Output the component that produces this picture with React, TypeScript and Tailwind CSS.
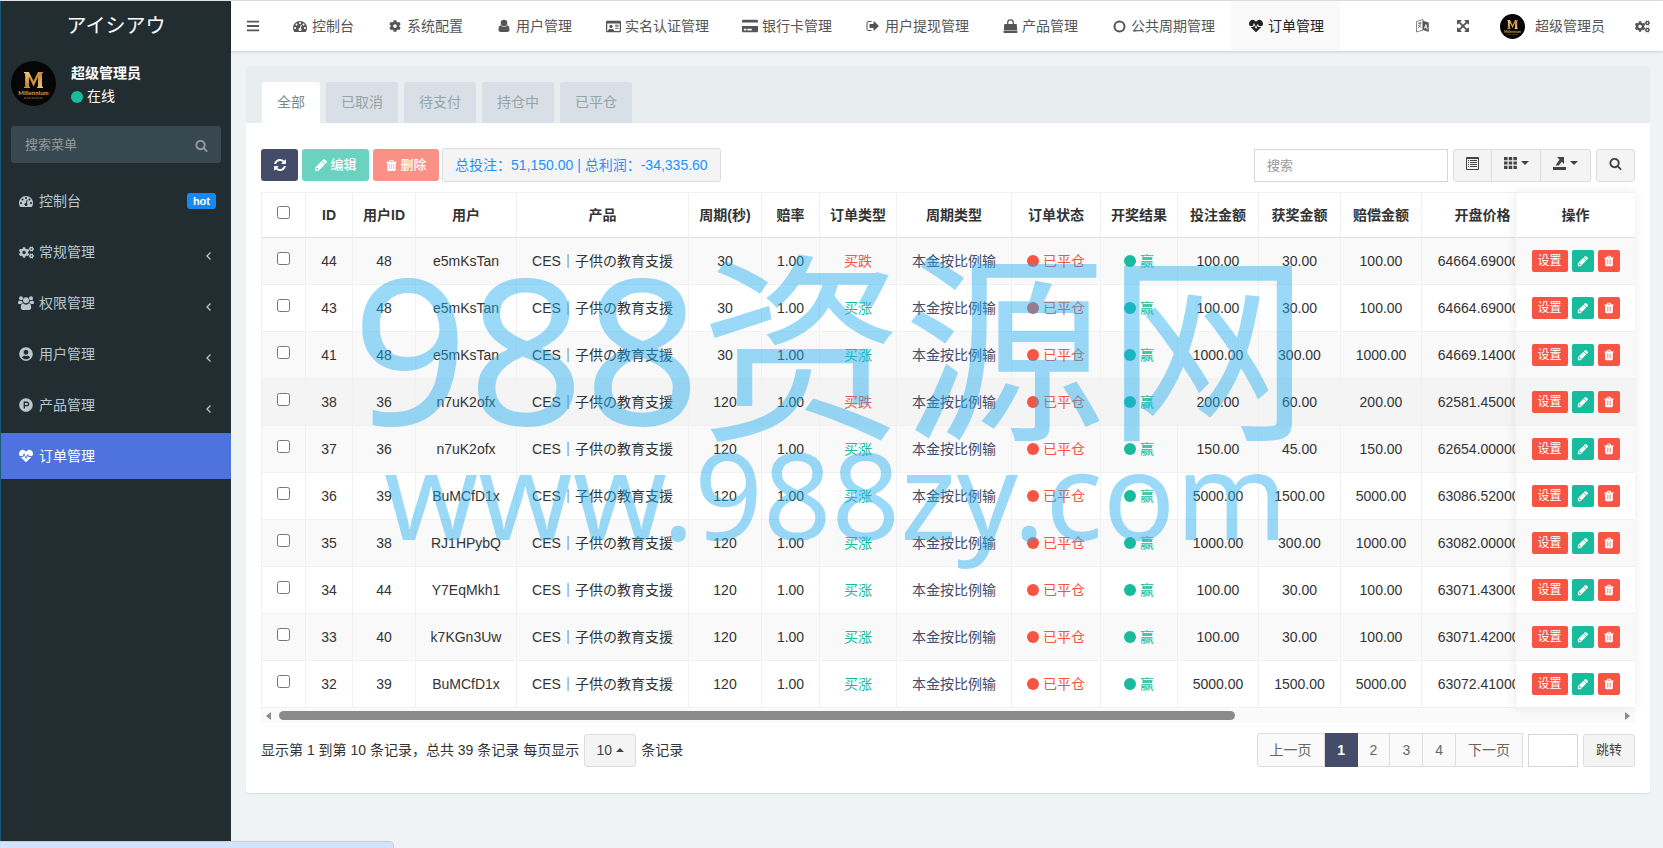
import type { ReactNode } from 'react';
import { FaBars, FaCog, FaCogs, FaCreditCard, FaHeartbeat, FaProductHunt, FaRegIdCard, FaUserCircle } from 'react-icons/fa';
import clsx from 'clsx';

interface GlyphProps {
  d: string;
  size?: number;
}

function Glyph({ d, size = 14 }: GlyphProps) {
  return (
    <svg width={size} height={size} viewBox="0 0 1792 1792" fill="currentColor" className="inline-block shrink-0" aria-hidden="true">
      <path d={d} />
    </svg>
  );
}

const DASHBOARD =
  'M384 1152q0-53-37.500-90.500t-90.500-37.500-90.500 37.500-37.500 90.500 37.500 90.500 90.500 37.500 90.500-37.500 37.500-90.500zm192-448q0-53-37.500-90.500t-90.500-37.500-90.500 37.500-37.500 90.500 37.500 90.500 90.500 37.500 90.500-37.500 37.500-90.500zm428 481l101-382q6-26-7.500-48.500t-38.500-29.500-48 6.500-30 39.500l-101 382q-60 5-107 43.500t-63 98.500q-20 77 20 146t117 89 146-20 89-117q16-60-6-117t-72-91zm660-33q0-53-37.500-90.500t-90.500-37.500-90.500 37.500-37.500 90.500 37.500 90.500 90.500 37.500 90.500-37.500 37.500-90.500zm-640-640q0-53-37.500-90.500t-90.500-37.500-90.500 37.500-37.500 90.500 37.500 90.500 90.500 37.500 90.500-37.500 37.500-90.500zm448 192q0-53-37.500-90.500t-90.500-37.500-90.500 37.500-37.500 90.500 37.500 90.500 90.500 37.500 90.500-37.500 37.500-90.500zm320 448q0 261-141 483-19 29-54 29h-1402q-35 0-54-29-141-221-141-483 0-182 71-348t191-286 286-191 348-71 348 71 286 191 191 286 71 348z';
const REFRESH =
  'M1639 1056q0 5-1 7-64 268-268 434.500t-478 166.500q-146 0-282.500-55t-243.500-157l-129 129q-19 19-45 19t-45-19-19-45v-448q0-26 19-45t45-19h448q26 0 45 19t19 45-19 45l-137 137q71 66 161 102t187 36q134 0 250-65t186-179q11-17 53-117 8-23 30-23h192q13 0 22.500 9.500t9.500 22.500zm25-800v448q0 26-19 45t-45 19h-448q-26 0-45-19t-19-45 19-45l138-138q-148-137-349-137-134 0-250 65t-186 179q-11 17-53 117-8 23-30 23h-199q-13 0-22.500-9.500t-9.500-22.500v-7q65-268 270-434.500t480-166.500q146 0 284 55.500t245 156.500l130-129q19-19 45-19t45 19 19 45z';
const PENCIL =
  'M491 1536l91-91-235-235-91 91v107h128v128h107zm469-1120l416 416-832 832h-416v-416zm683 96q0 53-37 90l-166 166-416-416 166-165q36-38 90-38 53 0 91 38l235 234q37 39 37 91z';
const TRASH =
  'M672 1400v-744h-72v744zm260 0v-744h-72v744zm260 0v-744h-72v744zm-520-1016h448l-48-117q-7-9-17-11h-317q-10 2-17 11zm928 32v64q0 14-9 23t-23 9h-96v948q0 83-47 143.500t-113 60.500h-832q-66 0-113-58.500t-47-141.500v-952h-96q-14 0-23-9t-9-23v-64q0-14 9-23t23-9h309l70-167q15-37 54-63t79-26h320q40 0 79 26t54 63l70 167h309q14 0 23 9t9 23z';
const SEARCH =
  'M1216 832q0-185-131.500-316.500t-316.500-131.500-316.500 131.500-131.500 316.500 131.500 316.500 316.500 131.500 316.500-131.500 131.500-316.500zm512 832q0 52-38 90t-90 38q-54 0-90-38l-343-342q-179 124-399 124-143 0-273.500-55.500t-225-150-150-225-55.500-273.500 55.500-273.500 150-225 225-150 273.500-55.500 273.500 55.500 225 150 150 225 55.500 273.500q0 220-124 399l343 343q37 37 37 90z';
const SIGN_OUT =
  'M704 1440q0 4 1 20t.5 26.500-3 23.500-10 19.500-20.500 6.500h-320q-119 0-203.500-84.500t-84.500-203.500v-704q0-119 84.500-203.500t203.500-84.500h320q13 0 22.500 9.500t9.500 22.500q0 4 1 20t.5 26.500-3 23.500-10 19.500-20.500 6.500h-320q-66 0-113 47t-47 113v704q0 66 47 113t113 47h312l11.500 1 11.500 3 8 5.500 7 9 2 13.500zm928-544q0 26-19 45l-544 544q-19 19-45 19t-45-19-19-45v-288h-448q-26 0-45-19t-19-45v-384q0-26 19-45t45-19h448v-288q0-26 19-45t45-19 45 19l544 544q19 19 19 45z';
const ARROWS =
  'M1411 541l-355 355 355 355 144-144q29-31 70-14 39 17 39 59v448q0 26-19 45t-45 19h-448q-42 0-59-40-17-39 14-69l144-144-355-355-355 355 144 144q31 30 14 69-17 40-59 40h-448q-26 0-45-19t-19-45v-448q0-42 40-59 39-17 69 14l144 144 355-355-355-355-144 144q-19 19-45 19-12 0-24-5-40-17-40-59v-448q0-26 19-45t45-19h448q42 0 59 40 17 39-14 69l-144 144 355 355 355-355-144-144q-31-30-14-69 17-40 59-40h448q26 0 45 19t19 45v448q0 42-39 59-13 5-25 5-26 0-45-19z';

function UserGlyph() {
  return (
    <svg width="12" height="14" viewBox="0 0 12 14" fill="currentColor" aria-hidden="true">
      <circle cx="6" cy="4" r="3.300" />
      <path d="M2.700 6.300C1.200 6.700.5 8.200.5 10.800c0 1.300.8 2.200 2 2.200h7c1.200 0 2-.9 2-2.200 0-2.600-.7-4.100-2.200-4.500A4.300 4.300 0 0 1 6 7.800a4.300 4.300 0 0 1-3.300-1.500z" />
    </svg>
  );
}

function UsersGlyph() {
  return (
    <svg width="16" height="14" viewBox="0 0 16 14" fill="currentColor" aria-hidden="true">
      <circle cx="3" cy="2.200" r="2" />
      <circle cx="13" cy="2.200" r="2" />
      <circle cx="8" cy="4.300" r="3" />
      <path d="M1.200 4.500c-.8.300-1.200 1.300-1.200 2.400 0 .6.400 1 1 1h2.200c.4-.5 1-.8 1.700-.9A4 4 0 0 1 4 4.700c-.9.500-1.900.4-2.800-.2zM14.800 4.500c.8.300 1.200 1.300 1.200 2.400 0 .6-.4 1-1 1h-2.200c-.4-.5-1-.8-1.700-.9A4 4 0 0 0 12 4.700c.9.500 1.900.4 2.800-.2z" />
      <path d="M5 7.200c-1.500.2-2.200 1.900-2.200 4.600 0 1.300.8 2.100 2 2.100h6.400c1.200 0 2-.8 2-2.100 0-2.700-.7-4.400-2.200-4.600a4.300 4.300 0 0 1-6 0z" />
    </svg>
  );
}

function BagGlyph() {
  return (
    <svg width="15" height="14" viewBox="0 0 15 14" fill="currentColor" aria-hidden="true">
      <path d="M1.300 5h12.400l.5 6H.8zM.7 11.600h13.600l.2 1.600c0 .4-.3.800-.8.800H1.300c-.5 0-.8-.4-.8-.8z" />
      <path d="M4.700 7V3.700a2.800 2.800 0 0 1 5.600 0V7" fill="none" stroke="currentColor" strokeWidth="1.300" />
    </svg>
  );
}

function CircleGlyph() {
  return (
    <svg width="13" height="13" viewBox="0 0 13 13" fill="none" stroke="currentColor" strokeWidth="2" aria-hidden="true">
      <circle cx="6.500" cy="6.500" r="5" />
    </svg>
  );
}

function LanguageGlyph() {
  return (
    <svg width="13" height="14" viewBox="0 0 13 14" fill="none" stroke="currentColor" aria-hidden="true">
      <path d="M.5 2.500 7 .5v10.500l-6.500 2z" strokeWidth=".7" />
      <path d="M2 4.500l3.500-1M3.800 3v2.500M2 9c1.500-1 2.500-2.500 3-5M2.500 6c.5 1.500 1.500 2 3 2.500" strokeWidth=".7" />
      <path d="M7 2l5.500 1.800v8.700L7 10.800z" fill="currentColor" strokeWidth=".5" />
      <path d="M8.500 9.500l1.300-4 1.500 5M9 8.200l1.800.6" stroke="white" strokeWidth=".9" />
    </svg>
  );
}

function Millennium({ size }: { size: number }) {
  return (
    <svg width={size} height={size} viewBox="0 0 45 45" className="shrink-0" role="img" aria-label="Millennium">
      <defs>
        <linearGradient id="gold" x1="0" y1="0" x2="1" y2="1">
          <stop offset="0" stopColor="#f3d58b" />
          <stop offset="0.5" stopColor="#c98a35" />
          <stop offset="1" stopColor="#f0cf86" />
        </linearGradient>
      </defs>
      <circle cx="22.500" cy="22.500" r="22.500" fill="#060606" />
      <path
        d="M13 11h5l4.500 9 4.500-9h5v1.200h-1v13.600h1V27h-6v-1.200h1V16l-4.500 9.500L18 16v9.800h1V27h-6v-1.200h1.200V12.200H13z"
        fill="url(#gold)"
      />
      <text x="22.500" y="34" textAnchor="middle" fontSize="6" fontWeight="900" fill="#c9913f" fontFamily="Lato, sans-serif">
        Millennium
      </text>
      <path d="M13 37h19" stroke="#8a6a35" strokeWidth="1.200" strokeDasharray="2 .6" />
    </svg>
  );
}

function Caret({ up = false }: { up?: boolean }) {
  return (
    <svg width="8" height="4" viewBox="0 0 8 4" fill="currentColor" aria-hidden="true">
      <path d={up ? 'M0 4l4-4 4 4z' : 'M0 0h8L4 4z'} />
    </svg>
  );
}

interface NavItem {
  icon: ReactNode;
  label: string;
  badge?: string;
  arrow?: boolean;
  active?: boolean;
}

const topNav: NavItem[] = [
  { icon: <Glyph d={DASHBOARD} />, label: '控制台' },
  { icon: <FaCog size={12} />, label: '系统配置' },
  { icon: <UserGlyph />, label: '用户管理' },
  { icon: <FaRegIdCard size={15} />, label: '实名认证管理' },
  { icon: <FaCreditCard size={16} />, label: '银行卡管理' },
  { icon: <Glyph d={SIGN_OUT} />, label: '用户提现管理' },
  { icon: <BagGlyph />, label: '产品管理' },
  { icon: <CircleGlyph />, label: '公共周期管理' },
  { icon: <FaHeartbeat size={14} />, label: '订单管理', active: true },
];

const sideNav: NavItem[] = [
  { icon: <Glyph d={DASHBOARD} />, label: '控制台', badge: 'hot' },
  { icon: <FaCogs size={15} />, label: '常规管理', arrow: true },
  { icon: <UsersGlyph />, label: '权限管理', arrow: true },
  { icon: <FaUserCircle size={14} />, label: '用户管理', arrow: true },
  { icon: <FaProductHunt size={14} />, label: '产品管理', arrow: true },
  { icon: <FaHeartbeat size={14} />, label: '订单管理', active: true },
];

const tabs = ['全部', '已取消', '待支付', '持仓中', '已平仓'];

const columns = [
  { title: 'ID', width: 47 },
  { title: '用户ID', width: 63 },
  { title: '用户', width: 101 },
  { title: '产品', width: 172 },
  { title: '周期(秒)', width: 73 },
  { title: '赔率', width: 58 },
  { title: '订单类型', width: 77 },
  { title: '周期类型', width: 115 },
  { title: '订单状态', width: 89 },
  { title: '开奖结果', width: 77 },
  { title: '投注金额', width: 81 },
  { title: '获奖金额', width: 82 },
  { title: '赔偿金额', width: 81 },
  { title: '开盘价格', width: 122 },
];

interface Order {
  id: number;
  uid: number;
  user: string;
  period: number;
  side: '买涨' | '买跌';
  bet: string;
  win: string;
  open: string;
  hovered?: boolean;
}

const orders: Order[] = [
  { id: 44, uid: 48, user: 'e5mKsTan', period: 30, side: '买跌', bet: '100.00', win: '30.00', open: '64664.690000' },
  { id: 43, uid: 48, user: 'e5mKsTan', period: 30, side: '买涨', bet: '100.00', win: '30.00', open: '64664.690000' },
  { id: 41, uid: 48, user: 'e5mKsTan', period: 30, side: '买涨', bet: '1000.00', win: '300.00', open: '64669.140000' },
  { id: 38, uid: 36, user: 'n7uK2ofx', period: 120, side: '买跌', bet: '200.00', win: '60.00', open: '62581.450000', hovered: true },
  { id: 37, uid: 36, user: 'n7uK2ofx', period: 120, side: '买涨', bet: '150.00', win: '45.00', open: '62654.000000' },
  { id: 36, uid: 39, user: 'BuMCfD1x', period: 120, side: '买涨', bet: '5000.00', win: '1500.00', open: '63086.520000' },
  { id: 35, uid: 38, user: 'RJ1HPybQ', period: 120, side: '买涨', bet: '1000.00', win: '300.00', open: '63082.000000' },
  { id: 34, uid: 44, user: 'Y7EqMkh1', period: 120, side: '买涨', bet: '100.00', win: '30.00', open: '63071.430000' },
  { id: 33, uid: 40, user: 'k7KGn3Uw', period: 120, side: '买涨', bet: '100.00', win: '30.00', open: '63071.420000' },
  { id: 32, uid: 39, user: 'BuMCfD1x', period: 120, side: '买涨', bet: '5000.00', win: '1500.00', open: '63072.410000' },
];

function rowColor(order: Order, index: number) {
  if (order.hovered) return 'bg-[#f4f4f4]';
  return index % 2 === 0 ? 'bg-[#f9f9f9]' : 'bg-white';
}

function Sidebar() {
  return (
    <aside className="flex w-[231px] shrink-0 flex-col border-l border-[#165a78] bg-[#222d32] text-[#b8c7ce]">
      <a href="#" className="flex h-[50px] items-center justify-center text-xl text-white">
        アイシアウ
      </a>
      <div className="flex gap-[15px] px-2.5 pt-2.5">
        <Millennium size={45} />
        <div className="pt-px text-sm leading-[23px] text-white">
          <p className="font-bold">超级管理员</p>
          <a href="#" className="flex items-center gap-1">
            <span className="size-3 rounded-full bg-[#18bc9c]" />
            在线
          </a>
        </div>
      </div>
      <form className="mx-2.5 mt-[18px] flex h-[37px] items-center rounded-[3px] bg-[#374850] pr-[13px] pl-3.5">
        <input
          type="text"
          aria-label="搜索菜单"
          placeholder="搜索菜单"
          className="min-w-0 flex-1 bg-transparent text-[13px] outline-none placeholder:text-[#999]"
        />
        <button type="button" aria-label="搜索" className="text-[#999]">
          <Glyph d={SEARCH} size={13} />
        </button>
      </form>
      <nav className="mt-[15px] flex flex-col gap-[5px]">
        {sideNav.map((item) => (
          <a
            key={item.label}
            href="#"
            className={clsx('flex h-[46px] items-center gap-1 pr-[15px] pl-4 text-sm', item.active && 'bg-[#4e73df] text-white')}
          >
            <span className="flex w-[18px] justify-center">{item.icon}</span>
            <span className="flex-1">{item.label}</span>
            {item.badge && (
              <span className="rounded-[3px] bg-[#1688f1] px-1.5 text-[11px] leading-4 font-bold text-white">{item.badge}</span>
            )}
            {item.arrow && (
              <svg width="5" height="8" viewBox="0 0 5 8" fill="none" stroke="currentColor" strokeWidth="1.300" className="mt-2 mr-[5px]" aria-hidden="true">
                <path d="M4.500.5 1 4l3.500 3.500" />
              </svg>
            )}
          </a>
        ))}
      </nav>
    </aside>
  );
}

function Header() {
  return (
    <header className="z-10 flex h-[50px] items-center bg-white text-sm text-[#555] shadow-[0_1px_3px_rgba(0,21,41,0.16)]">
      <button type="button" aria-label="菜单" className="flex h-full w-11 items-center justify-center">
        <FaBars size={14} />
      </button>
      <nav className="flex h-full">
        {topNav.map((item) => (
          <a
            key={item.label}
            href="#"
            className={clsx('flex items-center gap-[3px] px-4 whitespace-nowrap', item.active && 'bg-[#f9f9f9] text-[#222]')}
          >
            <span className="flex w-[18px] justify-center">{item.icon}</span>
            {item.label}
          </a>
        ))}
      </nav>
      <div className="ml-auto flex items-center pr-[13px]">
        <button type="button" aria-label="语言" className="w-10 pl-3.5">
          <LanguageGlyph />
        </button>
        <button type="button" aria-label="全屏" className="flex w-[42px] justify-center">
          <Glyph d={ARROWS} />
        </button>
        <a href="#" className="flex items-center gap-2.5 px-4">
          <Millennium size={25} />
          超级管理员
        </a>
        <button type="button" aria-label="设置" className="pl-3.5">
          <FaCogs size={15} />
        </button>
      </div>
    </header>
  );
}

function Toolbar() {
  const grey = 'flex items-center justify-center gap-1 border-[#ddd] bg-[#f4f4f4] pb-1 text-[#444]';
  return (
    <div className="flex h-[34px] items-center text-[13px]">
      <div className="flex items-center gap-1 text-white">
        <button type="button" aria-label="刷新" className="flex h-8 w-[37px] items-center justify-center rounded-[3px] bg-[#444c69]">
          <Glyph d={REFRESH} />
        </button>
        <button type="button" className="flex h-8 w-[67px] items-center justify-center gap-0.5 rounded-[3px] bg-[#6ad3c0] font-medium">
          <Glyph d={PENCIL} />
          编辑
        </button>
        <button type="button" className="flex h-8 w-[66px] items-center justify-center gap-0.5 rounded-[3px] bg-[#fa9086] font-medium">
          <Glyph d={TRASH} size={13} />
          删除
        </button>
      </div>
      <span className="ml-[3px] flex h-[34px] items-center rounded-[3px] border border-[#ddd] bg-[#f4f4f4] px-3 text-sm whitespace-nowrap text-[#1e90ff]">
        总投注：51,150.00 | 总利润：-34,335.60
      </span>
      <input
        type="text"
        aria-label="搜索"
        placeholder="搜索"
        className="ml-auto h-[33px] w-[194px] border border-[#d2d6de] px-3 outline-none placeholder:text-[#999]"
      />
      <div className="ml-[5px] flex">
        <button type="button" aria-label="切换" className={clsx(grey, 'h-[33px] w-[39px] rounded-l-[3px] border')}>
          <svg width="13" height="13" viewBox="0 0 13 13" aria-hidden="true">
            <path d="M.5.5h12v12H.5zM.5 1.500h12" fill="none" stroke="currentColor" />
            <path d="M2 3.500h1M2 5.500h1M2 7.500h1M2 9.500h1M4 3.500h7M4 5.500h7M4 7.500h7M4 9.500h7" stroke="currentColor" />
          </svg>
        </button>
        <button type="button" aria-label="列" className={clsx(grey, 'h-[33px] w-[49px] border-y border-r')}>
          <svg width="13" height="12" viewBox="0 0 13 12" fill="currentColor" aria-hidden="true">
            <path d="M0 0h3.500v3.200H0zM4.700 0h3.500v3.200H4.700zM9.400 0h3.500v3.200H9.400zM0 4.400h3.500v3.200H0zM4.700 4.400h3.500v3.200H4.700zM9.400 4.400h3.500v3.200H9.400zM0 8.800h3.500V12H0zM4.700 8.800h3.500V12H4.700zM9.400 8.800h3.500V12H9.400z" />
          </svg>
          <Caret />
        </button>
        <button type="button" aria-label="导出" className={clsx(grey, 'h-[33px] w-[50px] rounded-r-[3px] border-y border-r')}>
          <svg width="13" height="13" viewBox="0 0 13 13" fill="currentColor" aria-hidden="true">
            <path d="M0 10h13v3H0zM4 0h7v7L8.700 4.700 5.800 8.500H2.500L6.500 2.500z" />
          </svg>
          <Caret />
        </button>
      </div>
      <button type="button" aria-label="搜索" className={clsx(grey, 'ml-[5px] h-[33px] w-[39px] rounded-[3px] border')}>
        <Glyph d={SEARCH} size={13} />
      </button>
    </div>
  );
}

const th = 'h-[45px] border-r border-b border-r-[#f1f1f1] border-b-[#ddd] p-0 text-center font-bold';
const td = 'h-[47px] border-r border-b border-[#f1f1f1] p-0 text-center';

function OrderTable() {
  return (
    <div className="relative mt-[10px] flex text-sm leading-5 whitespace-nowrap text-[#333]">
      <div className="min-w-0 flex-1 overflow-hidden border-t border-l border-[#f1f1f1]">
        <table className="w-[1282px] table-fixed border-separate border-spacing-0">
          <colgroup>
            <col style={{ width: 44 }} />
            {columns.map((column) => (
              <col key={column.title} style={{ width: column.width }} />
            ))}
          </colgroup>
          <thead>
            <tr>
              <th className={th}>
                <input type="checkbox" aria-label="全选" className="mb-1.5 size-[13px] align-middle" />
              </th>
              {columns.map((column) => (
                <th key={column.title} className={th}>
                  {column.title}
                </th>
              ))}
            </tr>
          </thead>
          <tbody>
            {orders.map((order, index) => (
              <tr key={order.id} className={rowColor(order, index)}>
                <td className={td}>
                  <input type="checkbox" aria-label={`选择 ${order.id}`} className="mb-1.5 size-[13px] align-middle" />
                </td>
                <td className={td}>{order.id}</td>
                <td className={td}>{order.uid}</td>
                <td className={td}>{order.user}</td>
                <td className={td}>CES｜子供の教育支援</td>
                <td className={td}>{order.period}</td>
                <td className={td}>1.00</td>
                <td className={clsx(td, order.side === '买跌' ? 'text-[#f75444]' : 'text-[#18bc9c]')}>{order.side}</td>
                <td className={clsx(td, 'text-[#444c69]')}>本金按比例输</td>
                <td className={clsx(td, 'text-[#f75444]')}>
                  <span className="inline-flex items-center gap-1">
                    <span className="size-3 rounded-full bg-[#f75444]" />
                    已平仓
                  </span>
                </td>
                <td className={clsx(td, 'text-[#18bc9c]')}>
                  <span className="inline-flex items-center gap-1">
                    <span className="size-3 rounded-full bg-[#18bc9c]" />
                    赢
                  </span>
                </td>
                <td className={td}>{order.bet}</td>
                <td className={td}>{order.win}</td>
                <td className={td}>{order.bet}</td>
                <td className={td}>{order.open}</td>
              </tr>
            ))}
          </tbody>
        </table>
      </div>
      {/* Pinned actions column */}
      <table className="w-[120px] table-fixed border-separate border-spacing-0 border-t border-l border-[#f1f1f1] shadow-[0_0_10px_rgba(0,0,0,0.08)]">
        <thead>
          <tr>
            <th className={clsx(th, 'border-r-0 bg-white')}>操作</th>
          </tr>
        </thead>
        <tbody className="text-xs text-white">
          {orders.map((order, index) => (
            <tr key={order.id} className={rowColor(order, index)}>
              <td className={clsx(td, 'border-r-0')}>
                <div className="flex justify-center gap-1">
                  <button type="button" className="h-[22px] w-9 rounded-[2px] bg-[#f75444]">
                    设置
                  </button>
                  <button type="button" aria-label="编辑" className="flex size-[22px] items-center justify-center rounded-[2px] bg-[#18bc9c]">
                    <Glyph d={PENCIL} size={12} />
                  </button>
                  <button type="button" aria-label="删除" className="flex size-[22px] items-center justify-center rounded-[2px] bg-[#f75444]">
                    <Glyph d={TRASH} size={12} />
                  </button>
                </div>
              </td>
            </tr>
          ))}
        </tbody>
      </table>
    </div>
  );
}

function ScrollBar() {
  return (
    <div className="flex h-[15px] items-center gap-2 bg-[#fafafa] px-[5px] text-[#8b8b8b]">
      <svg width="5" height="8" viewBox="0 0 5 8" fill="currentColor" aria-hidden="true">
        <path d="M5 0v8L0 4z" />
      </svg>
      <div className="flex-1">
        <div className="h-[9px] w-5/7 rounded-full bg-[#8b8b8b]" />
      </div>
      <svg width="5" height="8" viewBox="0 0 5 8" fill="currentColor" aria-hidden="true">
        <path d="M0 0v8l5-4z" />
      </svg>
    </div>
  );
}

function Pagination() {
  const page = 'h-[34px] border-y border-r border-[#ddd] bg-[#fafafa] px-3 text-[#666]';
  return (
    <div className="mt-2.5 flex items-center text-sm text-[#333]">
      <span>显示第 1 到第 10 条记录，总共 39 条记录 每页显示</span>
      <button type="button" className="mx-[5px] flex h-[33px] w-[52px] items-center justify-center gap-1 rounded-[3px] border border-[#ddd] bg-[#f4f4f4] text-[#444]">
        10
        <Caret up />
      </button>
      <span>条记录</span>
      <nav className="ml-auto flex">
        <button type="button" className={clsx(page, 'rounded-l-[3px] border-l')}>
          上一页
        </button>
        <button type="button" className="h-[34px] w-[33px] bg-[#444c69] font-bold text-white">
          1
        </button>
        {[2, 3, 4].map((n) => (
          <button key={n} type="button" className={page}>
            {n}
          </button>
        ))}
        <button type="button" className={page}>
          下一页
        </button>
      </nav>
      <input type="text" aria-label="页码" className="ml-[5px] h-[33px] w-[50px] border border-[#d2d6de] px-2" />
      <button type="button" className="ml-[5px] h-[33px] w-[52px] rounded-[3px] border border-[#ddd] bg-[#f4f4f4] text-[13px] text-[#444]">
        跳转
      </button>
    </div>
  );
}

function Watermark() {
  return (
    <div className="pointer-events-none absolute top-0 left-[121px] z-20 font-['Noto_Sans','Noto_Sans_CJK_SC',sans-serif] whitespace-nowrap text-[#1fadf0]/45">
      <p className="pt-[175px] text-[203px] leading-[240px]">988资源网</p>
      <p className="-mt-[42px] pl-8 text-[120px] leading-[140px]">www.988zy.com</p>
    </div>
  );
}

export default function App() {
  return (
    <div className="relative flex min-h-screen border-t border-[#dfe3e3] bg-[#f0f3f6] font-['Liberation_Sans','Noto_Sans_CJK_SC',sans-serif]">
      <Sidebar />
      <div className="flex min-w-0 flex-1 flex-col">
        <Header />
        <main className="relative px-[15px] pt-[15px] pr-[13px]">
          <section className="rounded-[3px] bg-white shadow-[0_1px_1px_rgba(0,0,0,0.08)]">
            <div className="flex gap-1.5 rounded-t-[3px] bg-[#e8edf0] px-4 pt-4 text-sm">
              {tabs.map((tab, index) => (
                <button
                  key={tab}
                  type="button"
                  className={clsx(
                    'h-[41px] rounded-t-[3px] px-[15px] pb-0.5',
                    index === 0 ? 'bg-white text-[#7b8a8b]' : 'bg-[#d8dfe6] text-[#95a5a6]',
                  )}
                >
                  {tab}
                </button>
              ))}
            </div>
            <div className="px-[15px] pt-[25px] pb-[26px]">
              <Toolbar />
              <OrderTable />
              <ScrollBar />
              <Pagination />
            </div>
          </section>
          <Watermark />
        </main>
      </div>
      {/* Link hint of the browser */}
      <div className="absolute bottom-0 left-0 z-30 h-[7px] w-[394px] rounded-tr-[5px] border-t border-r border-[#c9cdd3] bg-[#d3e3fd]" />
    </div>
  );
}
